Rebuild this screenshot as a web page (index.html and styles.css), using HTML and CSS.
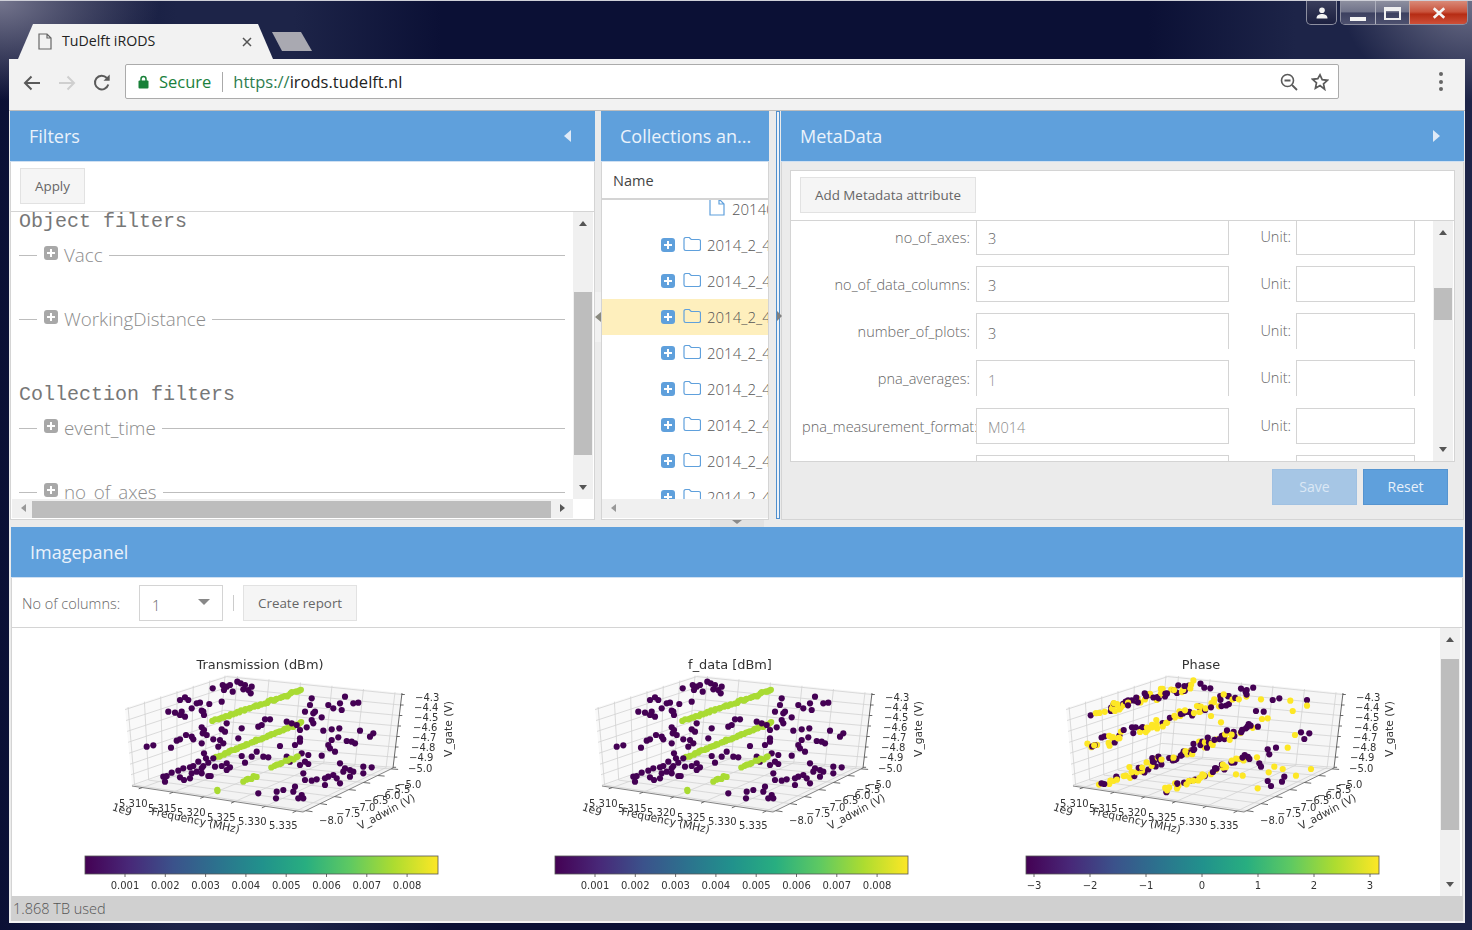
FILE: index.html
```html
<!DOCTYPE html>
<html lang="en">
<head>
  <meta charset="UTF-8" />
  <title>TuDelft iRODS</title>
  <link rel="stylesheet" href="styles.css">
</head>
<body>
  <svg class="defs" width="0" height="0">
    <symbol id="folder" viewBox="0 0 18 16"><path d="M1 3.2a1.7 1.7 0 0 1 1.7-1.7h3.6l1.9 2h7.6a1.7 1.7 0 0 1 1.7 1.7v7.6a1.7 1.7 0 0 1-1.7 1.7H2.700a1.700 1.700 0 0 1-1.700-1.700z" fill="none" stroke="#5fa0dc" stroke-width="1.200"/></symbol>
    <symbol id="file" viewBox="0 0 16 18"><path d="M1 1h9l5 5v11H1zM10 1v5h5" fill="none" stroke="#5fa0dc" stroke-width="1.200"/></symbol>
  </svg>
  <div class="window">
    <div class="titlebar">
      <div class="tab">
        <svg class="tab-icon" width="14" height="17" viewBox="0 0 14 17"><path d="M1 1h8l4 4v11H1zM9 1v4h4" fill="none" stroke="#666" stroke-width="1.200"/></svg>
        <span class="tab-title">TuDelft iRODS</span>
        <svg class="tab-close" width="10" height="10" viewBox="0 0 10 10"><path d="M1 1l8 8M9 1l-8 8" stroke="#555" stroke-width="1.500"/></svg>
      </div>
      <div class="newtab"></div>
      <div class="wincontrols">
        <div class="winbtn winbtn-user">
          <svg width="14" height="12" viewBox="0 0 14 12"><circle cx="7" cy="3.200" r="2.800" fill="#f2f2f2"/><path d="M1.500 11.500c0-3.500 3-4.500 5.500-4.500s5.500 1 5.500 4.500z" fill="#f2f2f2"/></svg>
        </div>
        <div class="wingroup">
          <div class="winbtn winbtn-min"><span class="min-mark"></span></div>
          <div class="winbtn winbtn-max"><span class="max-mark"></span></div>
          <div class="winbtn winbtn-close">
            <svg width="14" height="12" viewBox="0 0 16 13"><path d="M2 1l12 11M14 1L2 12" stroke="#f4f4f4" stroke-width="3"/></svg>
          </div>
        </div>
      </div>
    </div>

    <div class="toolbar">
      <svg class="nav-icon" width="18" height="16" viewBox="0 0 18 16"><path d="M17 8H2M8.500 1.500L2 8l6.500 6.500" fill="none" stroke="#5a5a5a" stroke-width="2"/></svg>
      <svg class="nav-icon" width="18" height="16" viewBox="0 0 18 16"><path d="M1 8h15M9.500 1.500L16 8l-6.500 6.500" fill="none" stroke="#cfcfcf" stroke-width="2"/></svg>
      <svg class="nav-icon" width="18" height="18" viewBox="0 0 18 18"><path d="M15.300 10.500A6.800 6.800 0 1 1 13.800 4" fill="none" stroke="#5a5a5a" stroke-width="2"/><path d="M10.500 6.800h6.200V.6z" fill="#5a5a5a"/></svg>
      <div class="omnibox">
        <svg class="lock" width="11" height="14" viewBox="0 0 11 14"><path d="M3 6V4a2.500 2.500 0 0 1 5 0v2" fill="none" stroke="#188038" stroke-width="1.500"/><rect x="0.500" y="5.500" width="10" height="8" rx="1" fill="#188038"/></svg>
        <span class="secure">Secure</span>
        <span class="omni-sep"></span>
        <span class="url"><span class="url-scheme">https://</span>irods.tudelft.nl</span>
        <svg class="omni-zoom" width="18" height="18" viewBox="0 0 18 18"><circle cx="7.500" cy="7.500" r="6" fill="none" stroke="#5a5a5a" stroke-width="1.600"/><path d="M4.500 7.500h6M12 12l5 5" stroke="#5a5a5a" stroke-width="1.800"/></svg>
        <svg class="omni-star" width="18" height="18" viewBox="0 0 18 18"><path d="M9 1.800l2.200 4.900 5.300.6-4 3.600 1.100 5.300L9 12.500l-4.600 2.700 1.100-5.300-4-3.600 5.300-.6z" fill="none" stroke="#5a5a5a" stroke-width="1.700"/></svg>
      </div>
      <div class="kebab"><span></span><span></span><span></span></div>
    </div>

    <div class="app">
      <div class="top-row">
        <section class="panel">
          <header class="panel-head"><span>Filters</span><i class="tri tri-left"></i></header>
          <div class="filter-tools"><button class="btn">Apply</button></div>
          <div class="filter-body">
            <div class="filter-list">
              <h3 class="filter-heading filter-heading-first">Object filters</h3>
              <div class="filter-row"><span class="dash"></span><i class="plus plus-grey"></i><span class="filter-name">Vacc</span><span class="rule"></span></div>
              <div class="filter-row"><span class="dash"></span><i class="plus plus-grey"></i><span class="filter-name">WorkingDistance</span><span class="rule"></span></div>
              <h3 class="filter-heading">Collection filters</h3>
              <div class="filter-row"><span class="dash"></span><i class="plus plus-grey"></i><span class="filter-name">event_time</span><span class="rule"></span></div>
              <div class="filter-row"><span class="dash"></span><i class="plus plus-grey"></i><span class="filter-name">no_of_axes</span><span class="rule"></span></div>
            </div>
            <div class="vscroll vscroll-filter"><i class="arr arr-up"></i><div class="vthumb"></div><i class="arr arr-down"></i></div>
          </div>
          <div class="hscroll-row">
            <div class="hscroll"><i class="arr arr-left"></i><div class="hthumb"></div><i class="arr arr-right"></i></div>
            <div class="corner"></div>
          </div>
        </section>

        <div class="splitter"><div class="handle"><i class="tri-small tri-small-left"></i></div></div>

        <section class="panel">
          <header class="panel-head"><span>Collections an...</span></header>
          <div class="tree-head">Name</div>
          <div class="tree">
            <div class="tree-row tree-row-file"><svg class="file-icon"><use href="#file"/></svg><span>20140</span></div>
            <div class="tree-row"><i class="plus"></i><svg class="folder-icon"><use href="#folder"/></svg><span>2014_2_4</span></div>
            <div class="tree-row"><i class="plus"></i><svg class="folder-icon"><use href="#folder"/></svg><span>2014_2_4</span></div>
            <div class="tree-row tree-row-active"><i class="plus"></i><svg class="folder-icon"><use href="#folder"/></svg><span>2014_2_4</span></div>
            <div class="tree-row"><i class="plus"></i><svg class="folder-icon"><use href="#folder"/></svg><span>2014_2_4</span></div>
            <div class="tree-row"><i class="plus"></i><svg class="folder-icon"><use href="#folder"/></svg><span>2014_2_4</span></div>
            <div class="tree-row"><i class="plus"></i><svg class="folder-icon"><use href="#folder"/></svg><span>2014_2_4</span></div>
            <div class="tree-row"><i class="plus"></i><svg class="folder-icon"><use href="#folder"/></svg><span>2014_2_4</span></div>
            <div class="tree-row"><i class="plus"></i><svg class="folder-icon"><use href="#folder"/></svg><span>2014_2_4</span></div>
          </div>
          <div class="hscroll hscroll-tree"><i class="arr arr-left"></i></div>
        </section>

        <div class="splitter splitter-wide">
          <div class="blue-bar"></div>
          <div class="handle handle-right"><i class="tri-small tri-small-right"></i></div>
        </div>

        <section class="panel panel-meta">
          <header class="panel-head"><span>MetaData</span><i class="tri tri-right"></i></header>
          <div class="meta-card">
            <div class="meta-tools"><button class="btn">Add Metadata attribute</button></div>
            <div class="meta-body">
              <div class="meta-rows">
                <div class="meta-row meta-row-first">
                  <label class="field-label">no_of_axes:</label><div class="field field-value">3</div>
                  <label class="unit-label">Unit:</label><div class="field field-unit"></div>
                </div>
                <div class="meta-row">
                  <label class="field-label">no_of_data_columns:</label><div class="field field-value">3</div>
                  <label class="unit-label">Unit:</label><div class="field field-unit"></div>
                </div>
                <div class="meta-row">
                  <label class="field-label">number_of_plots:</label><div class="field field-value field-open">3</div>
                  <label class="unit-label">Unit:</label><div class="field field-unit field-open"></div>
                </div>
                <div class="meta-row meta-row-tall">
                  <label class="field-label">pna_averages:</label><div class="field field-value field-open field-faint">1</div>
                  <label class="unit-label">Unit:</label><div class="field field-unit field-open"></div>
                </div>
                <div class="meta-row">
                  <label class="field-label field-label-long">pna_measurement_format:</label><div class="field field-value field-faint">M014</div>
                  <label class="unit-label">Unit:</label><div class="field field-unit"></div>
                </div>
                <div class="meta-row">
                  <label class="field-label"></label><div class="field field-value"></div>
                  <label class="unit-label"></label><div class="field field-unit"></div>
                </div>
              </div>
              <div class="vscroll vscroll-meta"><i class="arr arr-up"></i><div class="vthumb"></div><i class="arr arr-down"></i></div>
            </div>
          </div>
          <div class="meta-actions">
            <button class="btn-primary btn-disabled">Save</button>
            <button class="btn-primary">Reset</button>
          </div>
        </section>
      </div>

      <div class="row-splitter"><div class="row-handle"><i class="tri-small tri-small-down"></i></div></div>

      <section class="panel panel-images">
        <header class="panel-head"><span>Imagepanel</span></header>
        <div class="image-tools">
          <span class="cols-label">No of columns:</span>
          <div class="select"><span>1</span><i class="select-arrow"></i></div>
          <span class="tools-sep"></span>
          <button class="btn">Create report</button>
        </div>
        <div class="image-body">
          <div class="plots" id="plots"></div>
          <div class="vscroll vscroll-images"><i class="arr arr-up"></i><div class="vthumb"></div><i class="arr arr-down"></i></div>
        </div>
        <div class="statusbar">1.868 TB used</div>
      </section>
    </div>
  </div>
  <script src="plots.js"></script>
</body>
</html>
```

FILE: styles.css
```css
* {
  box-sizing: border-box;
}
html, body {
  margin: 0;
  height: 100%;
  overflow: hidden;
}
body {
  font-family: "Open Sans", sans-serif;
  color: #666;
}
.defs {
  position: absolute;
}
.window {
  width: 1472px;
  height: 930px;
  padding: 0 7px 7px 9px;
  display: flex;
  flex-direction: column;
  border-top: 1px solid #cfd0d8;
  background:
    radial-gradient(ellipse 160px 100px at 0 0, #74758d, rgba(116, 117, 141, 0) 100%),
    radial-gradient(ellipse 130px 100px at 100% 0, #6d6f88, rgba(109, 111, 136, 0) 100%),
    linear-gradient(90deg, #0b1035 0, #1d2448 12%, #1d2448 20%, #0b1035 30%, #0b1035 78%, #1d2448 88%, #1d2448 100%);
}

/* browser chrome */
.titlebar {
  height: 58px;
  display: flex;
  align-items: flex-end;
  position: relative;
}
.tab {
  width: 255px;
  height: 35px;
  margin-left: 9px;
  padding: 0 21px 0 20px;
  display: flex;
  align-items: center;
  background: #f2f2f2;
  clip-path: polygon(15px 0, 240px 0, 100% 100%, 0 100%);
}
.tab-icon {
  margin-right: 10px;
}
.tab-title {
  flex: 1;
  margin-top: -2px;
  font-size: 14.200px;
  color: #222;
}
.newtab {
  width: 40px;
  height: 19px;
  margin: 0 0 8px -1px;
  background: #a9a9b1;
  clip-path: polygon(0 0, 29px 0, 100% 100%, 10px 100%);
}
.wincontrols {
  margin-left: auto;
  margin-right: -3px;
  align-self: flex-start;
  display: flex;
  gap: 3px;
}
.wingroup {
  display: flex;
  height: 24px;
  border: 1px solid #8d8fa0;
  border-top: 0;
  border-radius: 0 0 5px 5px;
  overflow: hidden;
}
.winbtn {
  display: flex;
  align-items: center;
  justify-content: center;
  height: 24px;
  background: linear-gradient(#8d8f9f, #70738a 45%, #3c4060 50%, #4f5270);
}
.winbtn-user {
  width: 31px;
  border: 1px solid #8d8fa0;
  border-top: 0;
  border-radius: 0 0 5px 5px;
  background: linear-gradient(#3a3e5c, #2a2e4d 50%, #1c2040);
}
.winbtn-min {
  width: 35px;
  border-right: 1px solid #aeb0bd;
}
.winbtn-max {
  width: 33px;
}
.winbtn-close {
  width: 58px;
  border-left: 1px solid #c9a59b;
  background: linear-gradient(#d98a78, #c9533c 45%, #b62c14 55%, #d0533c);
}
.min-mark {
  width: 16px;
  height: 4px;
  margin-top: 11px;
  background: #f4f4f4;
}
.max-mark {
  width: 17px;
  height: 13px;
  border: 2px solid #f0f0f0;
  border-top-width: 4px;
}
.toolbar {
  height: 52px;
  padding: 0 0 1px 14px;
  display: flex;
  align-items: center;
  gap: 17px;
  background: #f2f2f2;
  border-bottom: 1px solid #bdbdbd;
}
.nav-icon {
  flex: none;
  margin-top: -3px;
}
.omnibox {
  width: 1214px;
  height: 35px;
  margin: -5px 0 0 -3px;
  padding: 0 9px 0 12px;
  display: flex;
  align-items: center;
  background: #fff;
  border: 1px solid #ababab;
  border-radius: 2px;
}
.secure {
  margin-left: 10px;
  font-size: 16.500px;
  color: #1a7f3c;
}
.omni-sep {
  width: 1px;
  height: 20px;
  margin: 0 10px 0 11px;
  background: #aaa;
}
.url {
  font-size: 16.500px;
  color: #222;
}
.url-scheme {
  color: #2e7d4f;
}
.omni-zoom {
  margin-left: auto;
}
.omni-star {
  margin-left: 13px;
}
.kebab {
  margin: -5px 0 0 83px;
  display: flex;
  flex-direction: column;
  gap: 3.500px;
}
.kebab span {
  width: 4px;
  height: 4px;
  border-radius: 50%;
  background: #666;
}

/* application */
.app {
  height: 812px;
  padding: 0 1px 2px 1px;
  display: flex;
  flex-direction: column;
  background: #ebebeb;
  border-bottom: 2px solid #f4f4f4;
}
.top-row {
  flex: none;
  height: 409px;
  display: grid;
  grid-template-columns: 585px 6px 168px 12px 683px;
  grid-template-rows: 409px;
}
.panel {
  display: flex;
  flex-direction: column;
  min-width: 0;
  min-height: 0;
  background: #fff;
  border: 1px solid #d4d4d4;
  border-top: 0;
}
.panel-head {
  flex: none;
  height: 51px;
  margin: 0 -1px;
  padding: 0 24px 0 19px;
  display: flex;
  align-items: center;
  justify-content: space-between;
  font-size: 18px;
  white-space: nowrap;
  color: #eaf2fb;
  background: #5fa0dc;
  border-bottom: 1px solid #cfe0f2;
}
.tri {
  width: 0;
  height: 0;
  border-top: 6px solid transparent;
  border-bottom: 6px solid transparent;
}
.tri-left {
  border-right: 7px solid #dfeaf7;
}
.tri-right {
  border-left: 7px solid #dfeaf7;
}
.btn {
  font: 13.400px "Open Sans", sans-serif;
  color: #666;
  padding: 0 14px;
  height: 36px;
  background: #f5f5f5;
  border: 1px solid #e2e2e2;
}
.filter-tools {
  flex: none;
  height: 50px;
  padding: 6px 0 0 9px;
  border-bottom: 1px solid #d4d4d4;
}
.filter-body {
  flex: 1;
  min-height: 0;
  display: flex;
}
.filter-list {
  flex: 1;
  min-width: 0;
  padding: 0 8px;
  overflow: hidden;
}
.filter-heading {
  margin: 54px 0 0;
  font: 400 20px/20px "Liberation Mono", monospace;
  color: #777;
}
.filter-heading-first {
  margin-top: 0;
}
.filter-heading + .filter-row {
  margin-top: 11px;
}
.filter-row {
  height: 24px;
  margin-bottom: 40px;
  display: flex;
  align-items: center;
  font-size: 18.800px;
}
.dash {
  width: 18px;
  height: 1px;
  background: #bdbdbd;
}
.rule {
  flex: 1;
  height: 1px;
  margin-left: 6px;
  background: #bdbdbd;
}
.filter-name {
  margin-left: 6px;
  font-weight: 300;
  color: #8c8c8c;
  white-space: nowrap;
}
.plus {
  position: relative;
  flex: none;
  width: 14px;
  height: 14px;
  border-radius: 3px;
  background: #5fa0dc;
}
.plus::before, .plus::after {
  content: "";
  position: absolute;
  background: #fff;
}
.plus::before {
  left: 3px;
  right: 3px;
  top: 6px;
  height: 2px;
}
.plus::after {
  top: 3px;
  bottom: 3px;
  left: 6px;
  width: 2px;
}
.plus-grey {
  margin: -4px 0 0 7px;
  background: #a8a8a8;
}

/* scrollbars */
.vscroll {
  flex: none;
  width: 20px;
  padding: 0 1px;
  display: flex;
  flex-direction: column;
  align-items: center;
  position: relative;
  background: #f0f0f0;
}
.vthumb {
  position: absolute;
  left: 1px;
  right: 1px;
  background: #bdbdbd;
}
.vscroll-filter {
  margin-right: 1px;
}
.vscroll-filter .vthumb {
  top: 80px;
  height: 163px;
}
.vscroll-meta .vthumb {
  top: 67px;
  height: 32px;
}
.vscroll-images .vthumb {
  top: 31px;
  height: 171px;
}
.arr {
  position: absolute;
  width: 0;
  height: 0;
}
.arr-up {
  top: 9px;
  left: 5.500px;
  border: 4.500px solid transparent;
  border-top: 0;
  border-bottom: 5px solid #555;
}
.arr-down {
  bottom: 9px;
  left: 5.500px;
  border: 4.500px solid transparent;
  border-bottom: 0;
  border-top: 5px solid #555;
}
.arr-left {
  left: 9px;
  top: 5px;
  border: 4.500px solid transparent;
  border-left: 0;
  border-right: 5px solid #999;
}
.arr-right {
  right: 8px;
  top: 5px;
  border: 4.500px solid transparent;
  border-right: 0;
  border-left: 5px solid #555;
}
.hscroll-row {
  flex: none;
  display: flex;
  height: 20px;
  margin-bottom: 0;
}
.hscroll {
  position: relative;
  height: 19px;
  background: #f0f0f0;
}
.hscroll-row .hscroll {
  flex: 1;
  margin-left: 1px;
}
.hthumb {
  position: absolute;
  left: 20px;
  width: 519px;
  top: 2px;
  bottom: 0;
  background: #bdbdbd;
}
.corner {
  width: 21px;
  background: #fff;
}
.hscroll-tree {
  flex: none;
  margin-bottom: 1px;
}

/* splitters */
.splitter {
  position: relative;
  background: #ebebeb;
}
.handle {
  position: absolute;
  left: 0;
  right: 0;
  top: 181px;
  height: 50px;
  display: flex;
  align-items: center;
  justify-content: center;
  background: #f1f1f1;
}
.handle-right {
  left: 7px;
  right: 0;
  top: 178px;
  height: 54px;
  justify-content: flex-start;
  background: transparent;
}
.blue-bar {
  position: absolute;
  left: 7px;
  width: 4px;
  top: 0;
  bottom: 1px;
  background: #eef3f9;
  border: 1px solid #4f8fce;
}
.tri-small {
  width: 0;
  height: 0;
  border-top: 5px solid transparent;
  border-bottom: 5px solid transparent;
}
.tri-small-left {
  border-right: 6px solid #8a8a80;
}
.tri-small-right {
  margin-left: 1px;
  border-left: 5px solid #808080;
}
.tri-small-down {
  border: 5px solid transparent;
  border-bottom: 0;
  border-top: 4px solid #8a8a8a;
}

/* tree */
.tree-head {
  flex: none;
  height: 38px;
  padding: 1px 11px 0;
  display: flex;
  align-items: center;
  font-size: 14.500px;
  color: #444;
  border-bottom: 2px solid #d4d4d4;
}
.tree {
  flex: 1;
  min-height: 0;
  overflow: hidden;
}
.tree-row {
  height: 36px;
  padding-left: 59px;
  display: flex;
  align-items: center;
  white-space: nowrap;
  font-size: 15px;
  font-weight: 300;
  color: #555;
}
.tree-row-file {
  margin-top: -9px;
  padding-left: 107px;
}
.tree-row-active {
  background: #feefbd;
}
.folder-icon {
  width: 18px;
  height: 16px;
  margin: -3px 6px 0 8px;
  flex: none;
}
.file-icon {
  width: 16px;
  height: 18px;
  margin: -4px 7px 0 0;
  flex: none;
}

/* metadata */
.panel-meta {
  background: #ebebeb;
}
.meta-card {
  flex: none;
  height: 292px;
  margin: 8px 8px 0;
  display: flex;
  flex-direction: column;
  background: #fff;
  border: 1px solid #d4d4d4;
}
.meta-tools {
  flex: none;
  height: 50px;
  padding: 6px 0 0 9px;
  border-bottom: 1px solid #d4d4d4;
}
.meta-body {
  flex: 1;
  min-height: 0;
  display: flex;
}
.meta-rows {
  flex: 1;
  min-width: 0;
  overflow: hidden;
}
.meta-row {
  height: 36px;
  margin-bottom: 11px;
  display: flex;
  align-items: center;
  font-size: 14.500px;
  font-weight: 300;
  color: #666;
}
.meta-row-first {
  margin-top: -2px;
}
.meta-row-tall {
  margin-bottom: 12px;
}
.field-label {
  width: 179px;
  margin-right: 6px;
  text-align: right;
  white-space: nowrap;
}
.field-label-long {
  width: 185px;
  margin-right: 0;
  padding-left: 11px;
  text-align: left;
  overflow: hidden;
}
.field {
  height: 36px;
  padding: 3px 11px 0;
  display: flex;
  align-items: center;
  font-size: 14.500px;
  border: 1px solid #d4d4d4;
}
.field-value {
  width: 253px;
}
.field-unit {
  width: 119px;
}
.field-open {
  border-bottom: 0;
}
.field-faint {
  color: #8c8c8c;
}
.unit-label {
  width: 62px;
  margin-right: 5px;
  margin-top: -1px;
  text-align: right;
}
.vscroll-meta {
  margin-right: 1px;
}
.meta-actions {
  flex: 1;
  padding: 7px 15px 0 0;
  display: flex;
  justify-content: flex-end;
  gap: 6px;
}
.btn-primary {
  width: 85px;
  height: 36px;
  padding-bottom: 2px;
  font: 14px "Open Sans", sans-serif;
  color: #e8f1fa;
  background: #5fa0dc;
  border: 1px solid #5594d0;
}
.btn-disabled {
  color: #dbe8f5;
  background: #a6c6e5;
  border-color: #a0c1e2;
}

/* image panel */
.row-splitter {
  flex: none;
  height: 7px;
  display: flex;
  justify-content: center;
  padding-right: 0;
}
.row-handle {
  width: 54px;
  height: 7px;
  display: flex;
  justify-content: center;
  background: #e2e2e2;
}
.panel-images {
  flex: none;
  width: 1452px;
  height: 394px;
  margin-left: 1px;
  border-bottom: 0;
}
.image-tools {
  flex: none;
  height: 50px;
  padding: 7px 0 0 10px;
  display: flex;
  align-items: flex-start;
  border-bottom: 1px solid #d4d4d4;
}
.cols-label {
  margin-top: 9px;
  width: 117px;
  font-size: 14.500px;
  font-weight: 300;
  color: #666;
}
.select {
  position: relative;
  width: 84px;
  height: 36px;
  padding: 10px 0 0 12px;
  font-size: 14.500px;
  font-weight: 300;
  border: 1px solid #d4d4d4;
}
.select-arrow {
  position: absolute;
  right: 12px;
  top: 13px;
  border: 6px solid transparent;
  border-bottom: 0;
  border-top: 6px solid #888;
}
.tools-sep {
  width: 1px;
  height: 16px;
  margin: 10px 9px 0 10px;
  background: #ccc;
}
.image-body {
  flex: 1;
  min-height: 0;
  display: flex;
}
.plots {
  flex: 1;
  min-width: 0;
  padding-left: 13px;
  display: flex;
  overflow: hidden;
}
.plot {
  flex: none;
  width: 470px;
  height: 268px;
  filter: blur(0.45px);
}
.plot:last-child {
  margin-left: 1px;
}
.plot text {
  font-family: "DejaVu Sans", sans-serif;
  font-size: 10px;
  fill: #333;
}
.plot .plot-title {
  font-size: 12.900px;
  text-anchor: middle;
}
.plot .axis-label {
  font-size: 10.700px;
}
.vscroll-images {
  margin-right: 2px;
}
.statusbar {
  flex: none;
  height: 25px;
  padding: 0 2px;
  margin: 0 -1px 0;
  display: flex;
  align-items: center;
  font-size: 14.500px;
  font-weight: 300;
  color: #555;
  background: #d0d0d0;
}
```

FILE: plots.js
```js
// draws the three matplotlib style scatter plots as svg

var PURPLE = "#440154";
var YELLOW = "#fde725";
var GREEN = "#a9db33";

var seed = 7;
function rnd() {
  seed = (seed * 16807) % 2147483647;
  return seed / 2147483647;
}

// corners of the 3d box
var A = [132, 786], B = [220, 755], C = [393, 768], D = [303, 812];
var T0 = [125, 708], T1 = [227, 675], T2 = [402, 693];

var freqTicks = [0.06, 0.24, 0.42, 0.6, 0.78, 0.96];
var adwinTicks = [0.03, 0.19, 0.35, 0.51, 0.67, 0.83, 0.98];
var gateTicks = [0.01, 0.145, 0.28, 0.42, 0.56, 0.7, 0.84, 0.98];

function mix(p, q, t) {
  return [p[0] + (q[0] - p[0]) * t, p[1] + (q[1] - p[1]) * t];
}

function line(p, q, cls, w) {
  return '<line x1="' + p[0].toFixed(1) + '" y1="' + p[1].toFixed(1) + '" x2="' + q[0].toFixed(1) + '" y2="' + q[1].toFixed(1) +
    '" stroke="' + cls + '" stroke-width="' + w + '"/>';
}

function poly(points, fill) {
  return '<polygon points="' + points.map(function (p) { return p.join(","); }).join(" ") + '" fill="' + fill + '"/>';
}

function label(x, y, str, rot) {
  var t = rot ? ' class="axis-label" transform="rotate(' + rot + " " + x + " " + y + ')" text-anchor="middle"' : "";
  return '<text x="' + x + '" y="' + y + '"' + t + ">" + str + "</text>";
}

function drawBox() {
  var s = "";
  var grid = "#d2d2d2";
  s += poly([A, B, T1, T0], "#f9f9f9");
  s += poly([B, C, T2, T1], "#f6f6f6");
  s += poly([A, B, C, D], "#f3f3f3");
  freqTicks.forEach(function (t) {
    var f = mix(A, D, t), b = mix(B, C, t), top = mix(T1, T2, t);
    s += line(f, b, grid, 0.8) + line(b, top, grid, 0.8);
    s += line(f, mix(f, b, -0.04), "#444", 0.8);
  });
  adwinTicks.forEach(function (t) {
    var f = mix(D, C, t), b = mix(A, B, t), top = mix(T0, T1, t);
    s += line(f, b, grid, 0.8) + line(b, top, grid, 0.8);
    s += line(f, mix(f, b, -0.04), "#444", 0.8);
  });
  gateTicks.forEach(function (t) {
    var l = mix(A, T0, t), m = mix(B, T1, t), r = mix(C, T2, t);
    s += line(l, m, grid, 0.8) + line(m, r, grid, 0.8);
    s += line(r, [r[0] + 3, r[1]], "#444", 0.8);
  });
  s += line(A, D, "#666", 0.8) + line(D, C, "#666", 0.8) + line(C, T2, "#444", 0.8);
  return s;
}

function drawLabels() {
  var s = "";
  var gate = ["4.3", "4.4", "4.5", "4.6", "4.7", "4.8", "4.9", "5.0"];
  var gateY = [701, 711, 721, 731, 741, 751, 761, 772];
  var gateX = [415, 414, 414, 413, 412, 411, 409, 408];
  gate.forEach(function (v, i) { s += label(gateX[i], gateY[i], "\u2212" + v); });
  s += label(452, 729, "V_gate (V)", -90);
  var freq = [["5.310", 119, 807], ["5.315", 148, 812], ["5.320", 177, 816], ["5.325", 207, 821], ["5.330", 238, 825], ["5.335", 269, 829]];
  freq.forEach(function (f) { s += label(f[1], f[2], f[0]); });
  s += label(121, 813, "1e9", 18);
  s += label(195, 824, "Frequency (MHz)", 12);
  var adwin = [["8.0", 319, 824], ["7.5", 336, 817], ["7.0", 351, 811], ["6.5", 364, 804], ["6.0", 376, 799], ["5.5", 386, 793], ["5.0", 397, 788]];
  adwin.forEach(function (a) { s += label(a[1], a[2], "\u2212" + a[0]); });
  s += label(388, 815, "V_adwin (V)", -28);
  return s;
}

function dot(x, y, color) {
  return '<circle cx="' + x.toFixed(1) + '" cy="' + y.toFixed(1) + '" r="3.100" fill="' + color + '"/>';
}

// purple points read off the first plot (zoomed coordinates)
var scatter = [[638,145],[668,135],[680,140],[690,135],[672,150],[698,155],[712,125],[722,130],[735,135],[730,148],[745,150],[755,140],[752,160],[665,185],
  [540,180],[555,172],[565,180],[575,205],[590,190],[600,188],[628,192],[605,212],[612,225],[505,215],[525,218],[545,215],[540,225],[555,230],[610,215],
  [440,320],[460,316],[513,323],[530,302],[540,298],[558,285],[575,290],[580,298],[605,262],[612,270],[608,280],[620,285],[605,310],[640,298],[660,300],[670,310],[655,320],[612,340],[595,365],[618,355],[605,385],
  [490,410],[500,408],[515,398],[495,425],[535,392],[550,385],[570,382],[580,378],[540,412],[552,420],[575,400],[570,415],[590,395],[605,400],[610,378],[625,368],[640,355],[625,408],[632,408],[645,380],[680,370],[690,382],[665,378],[680,390],
  [680,250],[665,268],[675,275],[725,265],[775,260],[785,255],[795,238],[810,238],[715,295],[860,245],[875,250],[890,255],[900,270],[920,262],[935,240],[940,250],[965,232],[970,272],[995,268],[1018,265],[1080,272],[1120,280],[1110,290],
  [915,215],[935,175],[930,195],[945,215],[940,220],[985,195],[1000,205],[1020,190],[1035,170],[1025,210],[1060,190],[1075,188],
  [900,295],[900,305],[885,315],[840,318],[725,348],[755,350],[770,335],[790,350],[805,352],[735,368],[925,345],[965,347],[905,340],[985,315],[995,300],[1015,292],[1040,303],[1055,305],[1065,310],[1005,335],[990,325],[860,350],[870,365],[900,375],[915,365],[925,372],[910,400],
  [1020,370],[1035,385],[1050,390],[1060,395],[1090,380],[1115,382],[1090,400],[1050,410],[1000,405],[1010,415],[1020,430],[985,410],[975,415],[950,418],[935,422],[915,420],[975,435],[1030,395],
  [775,460],[830,455],[850,450],[828,475],[885,440],[880,455],[905,465],[895,475],[910,475]];

function streak(x1, y1, x2, y2, n, color) {
  var s = "";
  for (var i = 0; i <= n; i++) {
    var t = i / n;
    var x = x1 + (x2 - x1) * t + (rnd() - 0.5) * 6;
    var y = y1 + (y2 - y1) * t + (rnd() - 0.5) * 6;
    s += dot(x / 3, 640 + y / 3, color);
  }
  return s;
}

function drawGreenDots() {
  var s = "";
  seed = 11;
  s += streak(640, 243, 905, 150, 40, GREEN);
  s += streak(650, 350, 905, 248, 40, GREEN);
  scatter.forEach(function (p) { s += dot(p[0] / 3, 640 + p[1] / 3, PURPLE); });
  s += streak(815, 380, 895, 350, 10, GREEN);
  s += streak(730, 422, 770, 408, 5, GREEN);
  s += streak(650, 452, 652, 452, 1, GREEN);
  return s;
}

function phaseStreak(x1, y1, x2, y2, n, spread) {
  var s = "";
  for (var i = 0; i <= n; i++) {
    var t = i / n;
    var x = x1 + (x2 - x1) * t + (rnd() - 0.5) * spread * 2;
    var y = y1 + (y2 - y1) * t + (rnd() - 0.5) * spread;
    s += dot(x / 3 + 60, 640 + y / 3, rnd() > 0.5 ? YELLOW : PURPLE);
  }
  return s;
}

function drawPhaseDots() {
  var s = "";
  seed = 7;
  s += phaseStreak(295, 215, 580, 130, 60, 26);
  s += phaseStreak(270, 320, 750, 152, 80, 24);
  s += phaseStreak(320, 425, 750, 257, 85, 26);
  s += phaseStreak(495, 452, 745, 350, 45, 14);
  var purple = [[815,180],[835,175],[918,180],[765,213],[788,215],[900,277],[925,280],[910,297],[800,328],[825,323],[805,343],[775,370],[780,380],[850,410],[843,425],[800,423],[810,438],[610,143],[628,145]];
  var yellow = [[780,178],[868,182],[918,197],[875,213],[783,237],[800,235],[660,247],[630,228],[882,285],[860,323],[768,352],[820,380],[845,387],[803,397],[770,445],[885,407],[930,387],[705,403],[725,407]];
  purple.forEach(function (p) { s += dot(p[0] / 3 + 60, 640 + p[1] / 3, PURPLE); });
  yellow.forEach(function (p) { s += dot(p[0] / 3 + 60, 640 + p[1] / 3, YELLOW); });
  return s;
}

function drawColorbar(id, ticks) {
  var s = '<rect x="85" y="856" width="353" height="18" fill="url(#' + id + ')" stroke="#555" stroke-width="0.800"/>';
  ticks.forEach(function (t) {
    s += line([t[0], 874], [t[0], 877], "#444", 0.8);
    s += '<text x="' + t[0] + '" y="889" text-anchor="middle">' + t[1] + "</text>";
  });
  return s;
}

function gradient(id) {
  var stops = ["#440154", "#482878", "#3b528b", "#2c728e", "#21918c", "#28ae80", "#5ec962", "#addc30", "#fde725"];
  var s = '<linearGradient id="' + id + '">';
  stops.forEach(function (c, i) { s += '<stop offset="' + i / 8 + '" stop-color="' + c + '"/>'; });
  return s + "</linearGradient>";
}

function plot(id, title, dots, ticks) {
  return '<svg class="plot" viewBox="25 628 470 268" width="470" height="268"><defs>' + gradient(id) + "</defs>" +
    '<text class="plot-title" x="260" y="669">' + title + "</text>" +
    drawBox() + dots + drawLabels() + drawColorbar(id, ticks) + "</svg>";
}

var dbTicks = [];
for (var i = 1; i <= 8; i++) {
  dbTicks.push([125 + (i - 1) * 40.3, "0.00" + i]);
}
var phaseTicks = [];
for (var j = -3; j <= 3; j++) {
  phaseTicks.push([261 + j * 56, j < 0 ? "\u2212" + -j : String(j)]);
}

document.getElementById("plots").innerHTML =
  plot("cb1", "Transmission (dBm)", drawGreenDots(), dbTicks) +
  plot("cb2", "f_data [dBm]", drawGreenDots(), dbTicks) +
  plot("cb3", "Phase", drawPhaseDots(), phaseTicks);
```
